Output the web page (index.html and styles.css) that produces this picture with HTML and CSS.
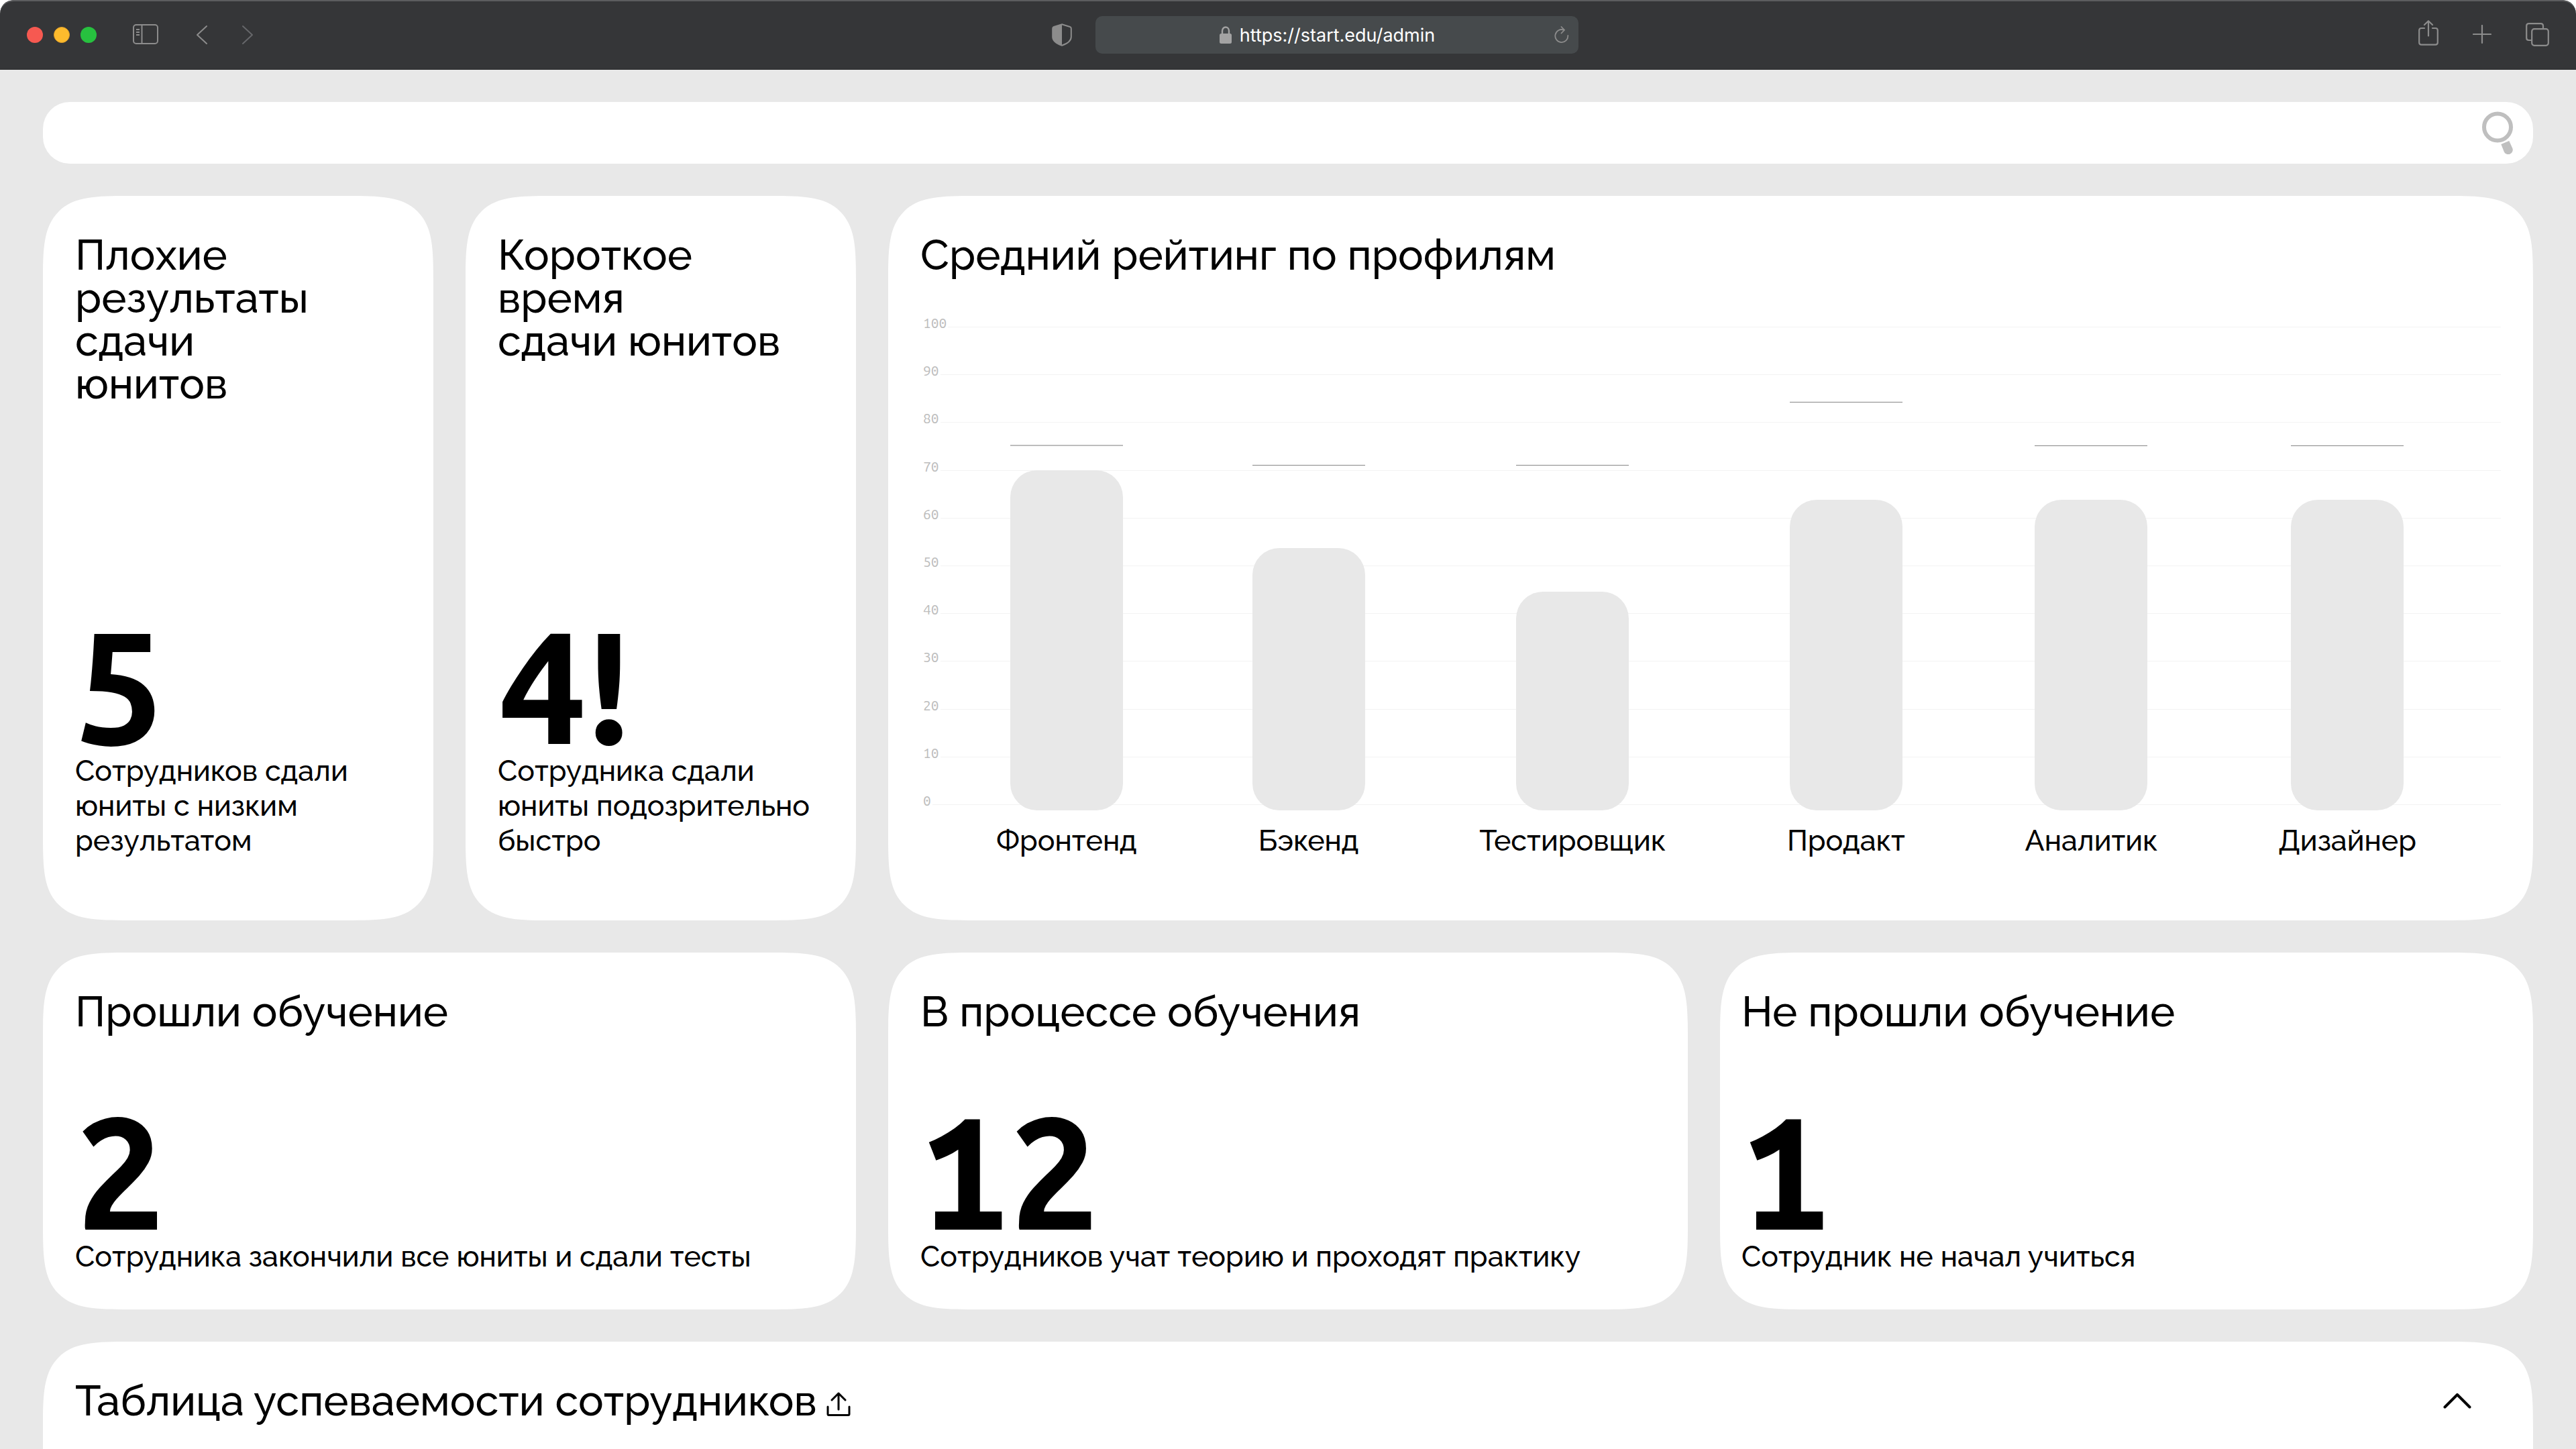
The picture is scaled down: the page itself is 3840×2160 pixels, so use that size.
FILE: index.html
```html
<!DOCTYPE html>
<html lang="ru">
<head>
    <meta charset="utf-8">
    <title>Админка</title>
    <link rel="stylesheet" href="styles.css">
</head>
<body>
<div class="window">

    <!-- Browser toolbar -->
    <header class="toolbar">
        <div class="toolbar-left">
            <div class="dots">
                <span class="dot red"></span>
                <span class="dot yellow"></span>
                <span class="dot green"></span>
            </div>
            <button type="button" class="icon-btn sidebar-btn" aria-label="Боковая панель">
                <svg width="38" height="32" viewBox="0 0 38 32" fill="none" stroke="currentColor" stroke-width="2">
                    <rect x="1" y="1" width="36" height="28" rx="4"/>
                    <path d="M13.5 1v28M5 8h5M5 12h5M5 16h5"/>
                </svg>
            </button>
            <button type="button" class="icon-btn back-btn" aria-label="Назад">
                <svg width="18" height="30" viewBox="0 0 18 30" fill="none" stroke="currentColor" stroke-width="2" stroke-linecap="round" stroke-linejoin="round">
                    <path d="M16 2L2 15l14 13"/>
                </svg>
            </button>
            <button type="button" class="icon-btn forward-btn" aria-label="Вперёд">
                <svg width="18" height="30" viewBox="0 0 18 30" fill="none" stroke="currentColor" stroke-width="2" stroke-linecap="round" stroke-linejoin="round">
                    <path d="M2 2l14 13L2 28"/>
                </svg>
            </button>
        </div>
        <div class="toolbar-center">
            <button type="button" class="icon-btn" aria-label="Защита">
                <svg width="30" height="34" viewBox="0 0 30 34">
                    <path d="M15 1.2L27 5q1.8.6 1.8 2.5v12.5q0 8-13.8 12.8Q1.2 28 1.2 20V7.5Q1.2 5.6 3 5z" fill="none" stroke="currentColor" stroke-width="2"/>
                    <path d="M15 1L2.5 5Q1 6 1 8v12q0 8 14 13z" fill="currentColor"/>
                </svg>
            </button>
            <div class="address">
                <label class="address-text">
                    <svg width="18" height="26" viewBox="0 0 18 26">
                        <path d="M4 12V7a5 5.5 0 0 1 10 0v5" fill="none" stroke="currentColor" stroke-width="2.4"/>
                        <rect x="0" y="11" width="18" height="15" rx="2.5" fill="currentColor"/>
                    </svg>
                    <input class="url" type="text" value="https://start.edu/admin" aria-label="Адрес">
                </label>
                <button type="button" class="icon-btn reload-btn" aria-label="Обновить">
                    <svg width="22" height="26" viewBox="0 0 22 26" fill="none" stroke="currentColor" stroke-width="1.8" stroke-linecap="round">
                        <path d="M14 5.6A9.5 9.5 0 1 0 20.3 14"/>
                        <path d="M10.5 1L15 5.8 10.5 10.5"/>
                    </svg>
                </button>
            </div>
        </div>
        <div class="toolbar-right">
            <button type="button" class="icon-btn" aria-label="Поделиться">
                <svg width="30" height="44" viewBox="0 0 30 44" fill="none" stroke="currentColor" stroke-width="2.2" stroke-linecap="round" stroke-linejoin="round">
                    <path d="M9 12H4.5Q1.2 12 1.2 15.3v18q0 3.3 3.3 3.3h21q3.3 0 3.3-3.3v-18Q28.8 12 25.5 12H21"/>
                    <path d="M15 23.5V1.5M9 7l6-5.8L21 7"/>
                </svg>
            </button>
            <button type="button" class="icon-btn" aria-label="Новая вкладка">
                <svg width="28" height="30" viewBox="0 0 28 30" fill="none" stroke="currentColor" stroke-width="2.2" stroke-linecap="round">
                    <path d="M14 1v26M1 14h26"/>
                </svg>
            </button>
            <button type="button" class="icon-btn" aria-label="Все вкладки">
                <svg width="35" height="37" viewBox="0 0 35 37" fill="none" stroke="currentColor" stroke-width="2.2">
                    <rect x="9.2" y="9.2" width="24.6" height="24.6" rx="3.5"/>
                    <path d="M26 9V4.7q0-3.5-3.5-3.5H4.7Q1.2 1.2 1.2 4.7v17.8q0 3.5 3.5 3.5H9"/>
                </svg>
            </button>
        </div>
    </header>

    <main class="page">
        <form class="search">
            <input type="search" class="search-input" aria-label="Поиск">
            <button type="submit" class="icon-btn search-btn" aria-label="Найти">
                <svg width="46" height="64" viewBox="0 0 46 64">
                    <circle cx="23" cy="23.5" r="20" fill="none" stroke="currentColor" stroke-width="6"/>
                    <path d="M28.3 49L40.3 44l5 11A6.8 6.8 0 0 1 33 60.7z" fill="currentColor"/>
                </svg>
            </button>
        </form>

        <!-- Alerts and chart -->
        <div class="row row-top">
            <section class="card">
                <h2>Плохие<br>результаты<br>сдачи<br>юнитов</h2>
                <div class="stat">
                    <div class="number">5</div>
                    <p>Сотрудников сдали юниты с низким результатом</p>
                </div>
            </section>
            <section class="card">
                <h2>Короткое<br>время<br>сдачи юнитов</h2>
                <div class="stat">
                    <div class="number">4<span class="alert">!</span></div>
                    <p>Сотрудника сдали юниты подозрительно быстро</p>
                </div>
            </section>
            <section class="card">
                <h2>Средний рейтинг по профилям</h2>
                <div class="chart">
                    <div class="axis">
                        <div class="tick">100</div>
                        <div class="tick">90</div>
                        <div class="tick">80</div>
                        <div class="tick">70</div>
                        <div class="tick">60</div>
                        <div class="tick">50</div>
                        <div class="tick">40</div>
                        <div class="tick">30</div>
                        <div class="tick">20</div>
                        <div class="tick">10</div>
                        <div class="tick">0</div>
                    </div>
                    <div class="bars">
                        <div class="bar-slot"><div class="mark main" style="bottom: 75%"></div><div class="bar" style="height: 70%"></div></div>
                        <div class="bar-slot"><div class="mark" style="bottom: 71%"></div><div class="bar" style="height: 54%"></div></div>
                        <div class="bar-slot"><div class="mark" style="bottom: 71%"></div><div class="bar" style="height: 45%"></div></div>
                        <div class="bar-slot"><div class="mark" style="bottom: 84%"></div><div class="bar" style="height: 64%"></div></div>
                        <div class="bar-slot"><div class="mark" style="bottom: 75%"></div><div class="bar" style="height: 64%"></div></div>
                        <div class="bar-slot"><div class="mark" style="bottom: 75%"></div><div class="bar" style="height: 64%"></div></div>
                    </div>
                </div>
                <div class="bar-names">
                    <span>Фронтенд</span>
                    <span>Бэкенд</span>
                    <span>Тестировщик</span>
                    <span>Продакт</span>
                    <span>Аналитик</span>
                    <span>Дизайнер</span>
                </div>
            </section>
        </div>

        <!-- Training status -->
        <div class="row row-status">
            <section class="card">
                <h2>Прошли обучение</h2>
                <div class="stat">
                    <div class="number">2</div>
                    <p>Сотрудника закончили все юниты и сдали тесты</p>
                </div>
            </section>
            <section class="card">
                <h2>В процессе обучения</h2>
                <div class="stat">
                    <div class="number">12</div>
                    <p>Сотрудников учат теорию и проходят практику</p>
                </div>
            </section>
            <section class="card narrow">
                <h2>Не прошли обучение</h2>
                <div class="stat">
                    <div class="number">1</div>
                    <p>Сотрудник не начал учиться</p>
                </div>
            </section>
        </div>

        <!-- Results table -->
        <section class="card table-card">
            <div class="table-head">
                <h2>Таблица успеваемости сотрудников</h2>
                <button type="button" class="icon-btn export-btn" aria-label="Выгрузить">
                    <svg width="36" height="36" viewBox="0 0 36 36" fill="none" stroke="currentColor" stroke-width="3" stroke-linecap="round" stroke-linejoin="round">
                        <path d="M2 22v11q0 1.5 1.5 1.5h29q1.5 0 1.5-1.5V22"/>
                        <path d="M18 26V2M8 12L18 2l10 10"/>
                    </svg>
                </button>
                <button type="button" class="icon-btn toggle-btn" aria-label="Свернуть">
                    <svg width="42" height="23" viewBox="0 0 42 23" fill="none" stroke="currentColor" stroke-width="4" stroke-linecap="round" stroke-linejoin="round">
                        <path d="M2.5 20.5L21 2l18.500 18.5"/>
                    </svg>
                </button>
            </div>
        </section>
    </main>
</div>
</body>
</html>
```
FILE: styles.css
```css
* {
    box-sizing: border-box;
}
body {
    margin: 0;
    background: #fff;
    color: #000;
    font-family: Raleway, "Open Sans", sans-serif;
    font-weight: 500;
}
h2, p {
    margin: 0;
}
svg {
    display: block;
}
.window {
    background: #e8e8e8;
    border-radius: 20px 20px 0 0;
    overflow: hidden;
}
.icon-btn {
    padding: 0;
    border: none;
    background: none;
    color: inherit;
    cursor: pointer;
}

/* Browser toolbar */
.toolbar {
    display: grid;
    grid-template-columns: 1fr auto 1fr;
    align-items: center;
    height: 104px;
    padding: 0 40px;
    background: #353638;
    box-shadow: inset 0 2px #5c5d5f, inset 0 -1px #2c2c2e;
    border-radius: 20px 20px 0 0;
    color: #8c8c8c;
}
.toolbar-left,
.toolbar-center,
.toolbar-right {
    display: flex;
    align-items: center;
}
.toolbar-center {
    gap: 35px;
    margin-left: 80px;
}
.toolbar-right {
    justify-content: flex-end;
    gap: 51px;
}
.dots {
    display: flex;
    gap: 16px;
}
.dot {
    width: 24px;
    height: 24px;
    border-radius: 50%;
}
.red {
    background: #f65951;
}
.yellow {
    background: #fdbb2d;
    border: 1px solid #dc9d2a;
}
.green {
    background: #27c13f;
}
.sidebar-btn {
    margin-left: 54px;
}
.back-btn {
    margin-left: 56px;
}
.forward-btn {
    margin-left: 50px;
    color: #66676a;
}
.address {
    display: flex;
    align-items: center;
    width: 720px;
    height: 56px;
    padding: 0 14px 0 8px;
    background: #464a4c;
    border-radius: 10px;
}
.address-text {
    display: flex;
    flex: 1;
    justify-content: center;
    align-items: center;
    gap: 12px;
    color: #a3a3a3;
}
.url {
    field-sizing: content;
    padding: 0;
    border: none;
    background: none;
    color: #fff;
    font: 400 27px Inter, sans-serif;
}

/* Page */
.page {
    display: flex;
    flex-direction: column;
    gap: 48px;
    padding: 48px 64px 0;
}
.search {
    display: flex;
    align-items: center;
    height: 92px;
    padding: 0 30px 0 48px;
    background: #fff;
    border-radius: 40px;
}
.search-input {
    flex: 1;
    border: none;
    outline: none;
    background: none;
    font: inherit;
    font-size: 43px;
}
.search-btn {
    color: #bfbfbf;
}
.row {
    display: grid;
    gap: 48px;
}
.row-top {
    grid-template-columns: 582px 582px 1fr;
}
.row-status {
    grid-template-columns: 1212px 1fr 1212px;
}
.card {
    display: flex;
    flex-direction: column;
    padding: 56px 48px 93px;
    background: #fff;
    border-radius: 128px;
    corner-shape: superellipse(1.78);
}
.row-status .card {
    min-height: 532px;
    padding-bottom: 53px;
}
.row-status .narrow {
    padding-left: 32px;
}
h2 {
    font-size: 63px;
    font-weight: 500;
    line-height: 64px;
}
.stat {
    margin-top: auto;
}
.stat p,
.bar-names {
    font-size: 43px;
    line-height: 52px;
}
.number {
    font-family: "Ubuntu Sans Mono", "Ubuntu Mono", "DejaVu Sans Mono", monospace;
    font-size: 236px;
    font-weight: 700;
    line-height: 188px;
}
.alert {
    font-family: "Ubuntu Sans", Ubuntu, "Noto Sans", sans-serif;
}

/* Chart */
.chart {
    display: grid;
    height: 732px;
    margin-top: 64px;
}
.axis,
.bars {
    grid-area: 1 / 1;
}
.axis {
    display: flex;
    flex-direction: column;
    justify-content: space-between;
    padding: 0 0 8px 4px;
    color: #bdbdbd;
    font: 21px/12px "Ubuntu Sans Mono", "Ubuntu Mono", "DejaVu Sans Mono", monospace;
}
.tick {
    display: flex;
    align-items: flex-end;
}
.tick::after {
    content: "";
    flex: 1;
    margin-left: 2px;
    border-bottom: 1px solid #f3f3f3;
}
.bars,
.bar-names {
    display: grid;
    grid-template-columns: 392fr 330fr 458fr 358fr 374fr 390fr;
    padding: 0 34px 0 22px;
}
.bars {
    margin-top: 8px;
}
.bar-slot {
    position: relative;
    display: flex;
    justify-content: center;
    align-items: flex-end;
}
.bar {
    width: 168px;
    background: #e8e8e8;
    border-radius: 40px;
}
/* target line above the bar */
.mark {
    position: absolute;
    width: 168px;
    height: 1px;
    background: #858585;
}
.mark.main {
    height: 2px;
    background: #bdbdbd;
}
.bar-names {
    margin-top: 19px;
    text-align: center;
}

/* Table */
.table-card {
    padding-bottom: 40px;
    border-radius: 128px 128px 0 0;
}
.table-head {
    display: flex;
    align-items: center;
    padding-right: 44px;
}
.export-btn {
    margin: 10px 0 0 14px;
}
.toggle-btn {
    margin-left: auto;
}
```
